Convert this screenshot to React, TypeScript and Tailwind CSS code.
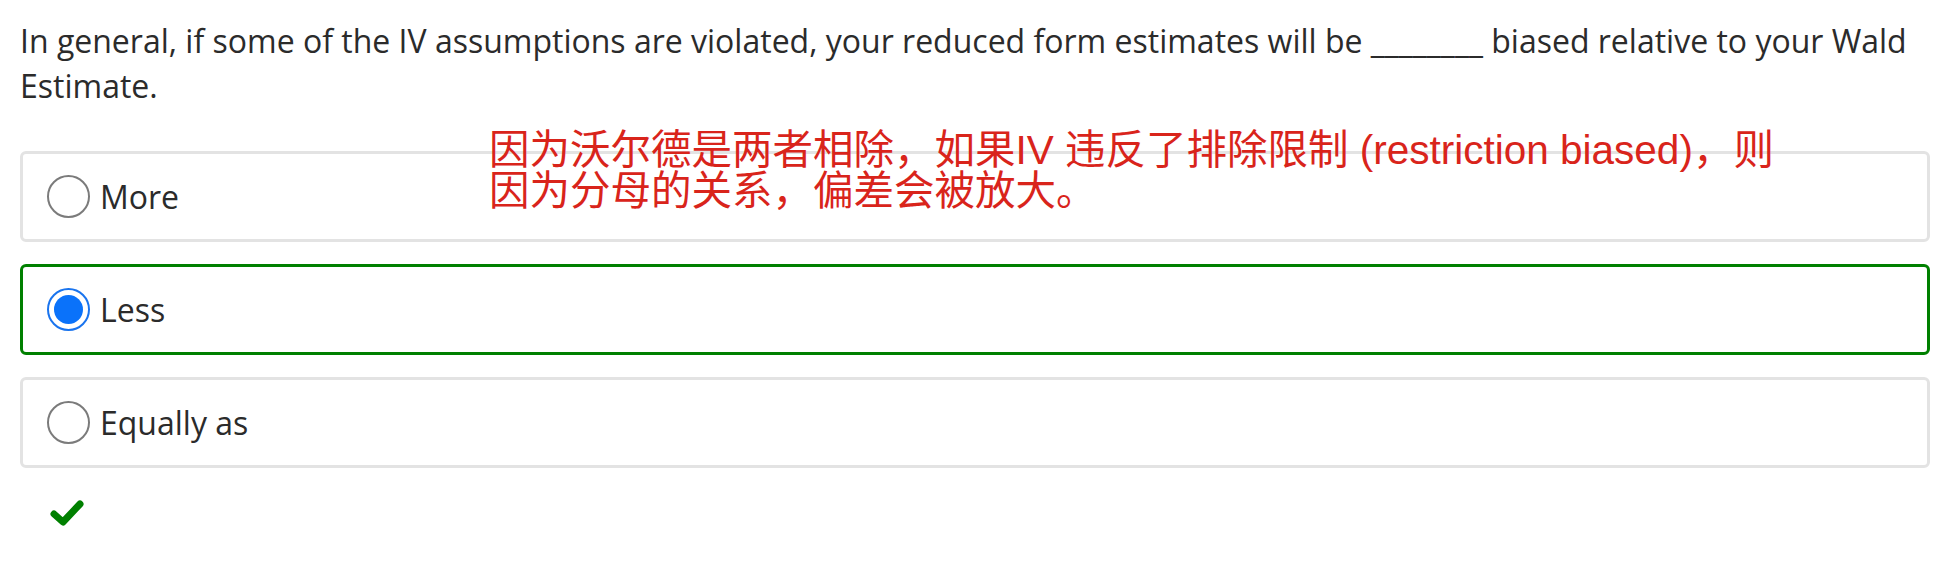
import React from 'react';

const options = [
  { label: 'More', selected: false },
  { label: 'Less', selected: true },
  { label: 'Equally as', selected: false },
];

function Radio({ selected }: { selected: boolean }) {
  if (selected) {
    return (
      <span className="w-[43px] h-[43px] shrink-0 rounded-full border-2 border-[#1a74ee] bg-white flex items-center justify-center">
        <span className="w-[29px] h-[29px] rounded-full bg-[#0a72fa]" />
      </span>
    );
  }
  return <span className="w-[43px] h-[43px] shrink-0 rounded-full border-2 border-[#7b7b7b] bg-white" />;
}

export default function App() {
  return (
    <div className="relative min-h-screen bg-white px-[20px] pt-[18px] pr-[26px]" style={{ fontFamily: '"Open Sans", "Noto Sans", sans-serif' }}>
      {/* Question */}
      <p className="text-[32px] leading-[45px] text-[#2b2b2b]">
        In general, if some of the IV assumptions are violated, your reduced form estimates will be ________ biased relative to your Wald Estimate.
      </p>

      {/* Options */}
      <div className="mt-[43px] flex flex-col gap-[22px]">
        {options.map((o) => (
          <label
            key={o.label}
            className={`flex items-center gap-[10px] rounded-[6px] border-[3px] bg-white px-[24px] py-[20px] ${
              o.selected ? 'border-[#008000]' : 'border-[#e3e3e3]'
            }`}
          >
            <Radio selected={o.selected} />
            <span className="text-[32px] leading-[45px] text-[#2b2b2b]">{o.label}</span>
          </label>
        ))}
      </div>

      {/* Correct mark */}
      <svg className="ml-[28px] mt-[30px]" width="38" height="30" viewBox="0 0 38 30">
        <polyline points="6,16 15,24 32,6" fill="none" stroke="#008000" strokeWidth="7" strokeLinecap="round" strokeLinejoin="round" />
      </svg>

      {/* Note overlay */}
      <div
        className="absolute left-[489px] top-[130px] whitespace-nowrap text-[40.5px] leading-[41px] text-[#d9241b]"
        style={{ fontFamily: '"Liberation Sans", "Noto Sans CJK SC", sans-serif' }}
      >
        因为沃尔德是两者相除，如果IV 违反了排除限制 (restriction biased)，则
        <br />
        因为分母的关系，偏差会被放大。
      </div>
    </div>
  );
}
